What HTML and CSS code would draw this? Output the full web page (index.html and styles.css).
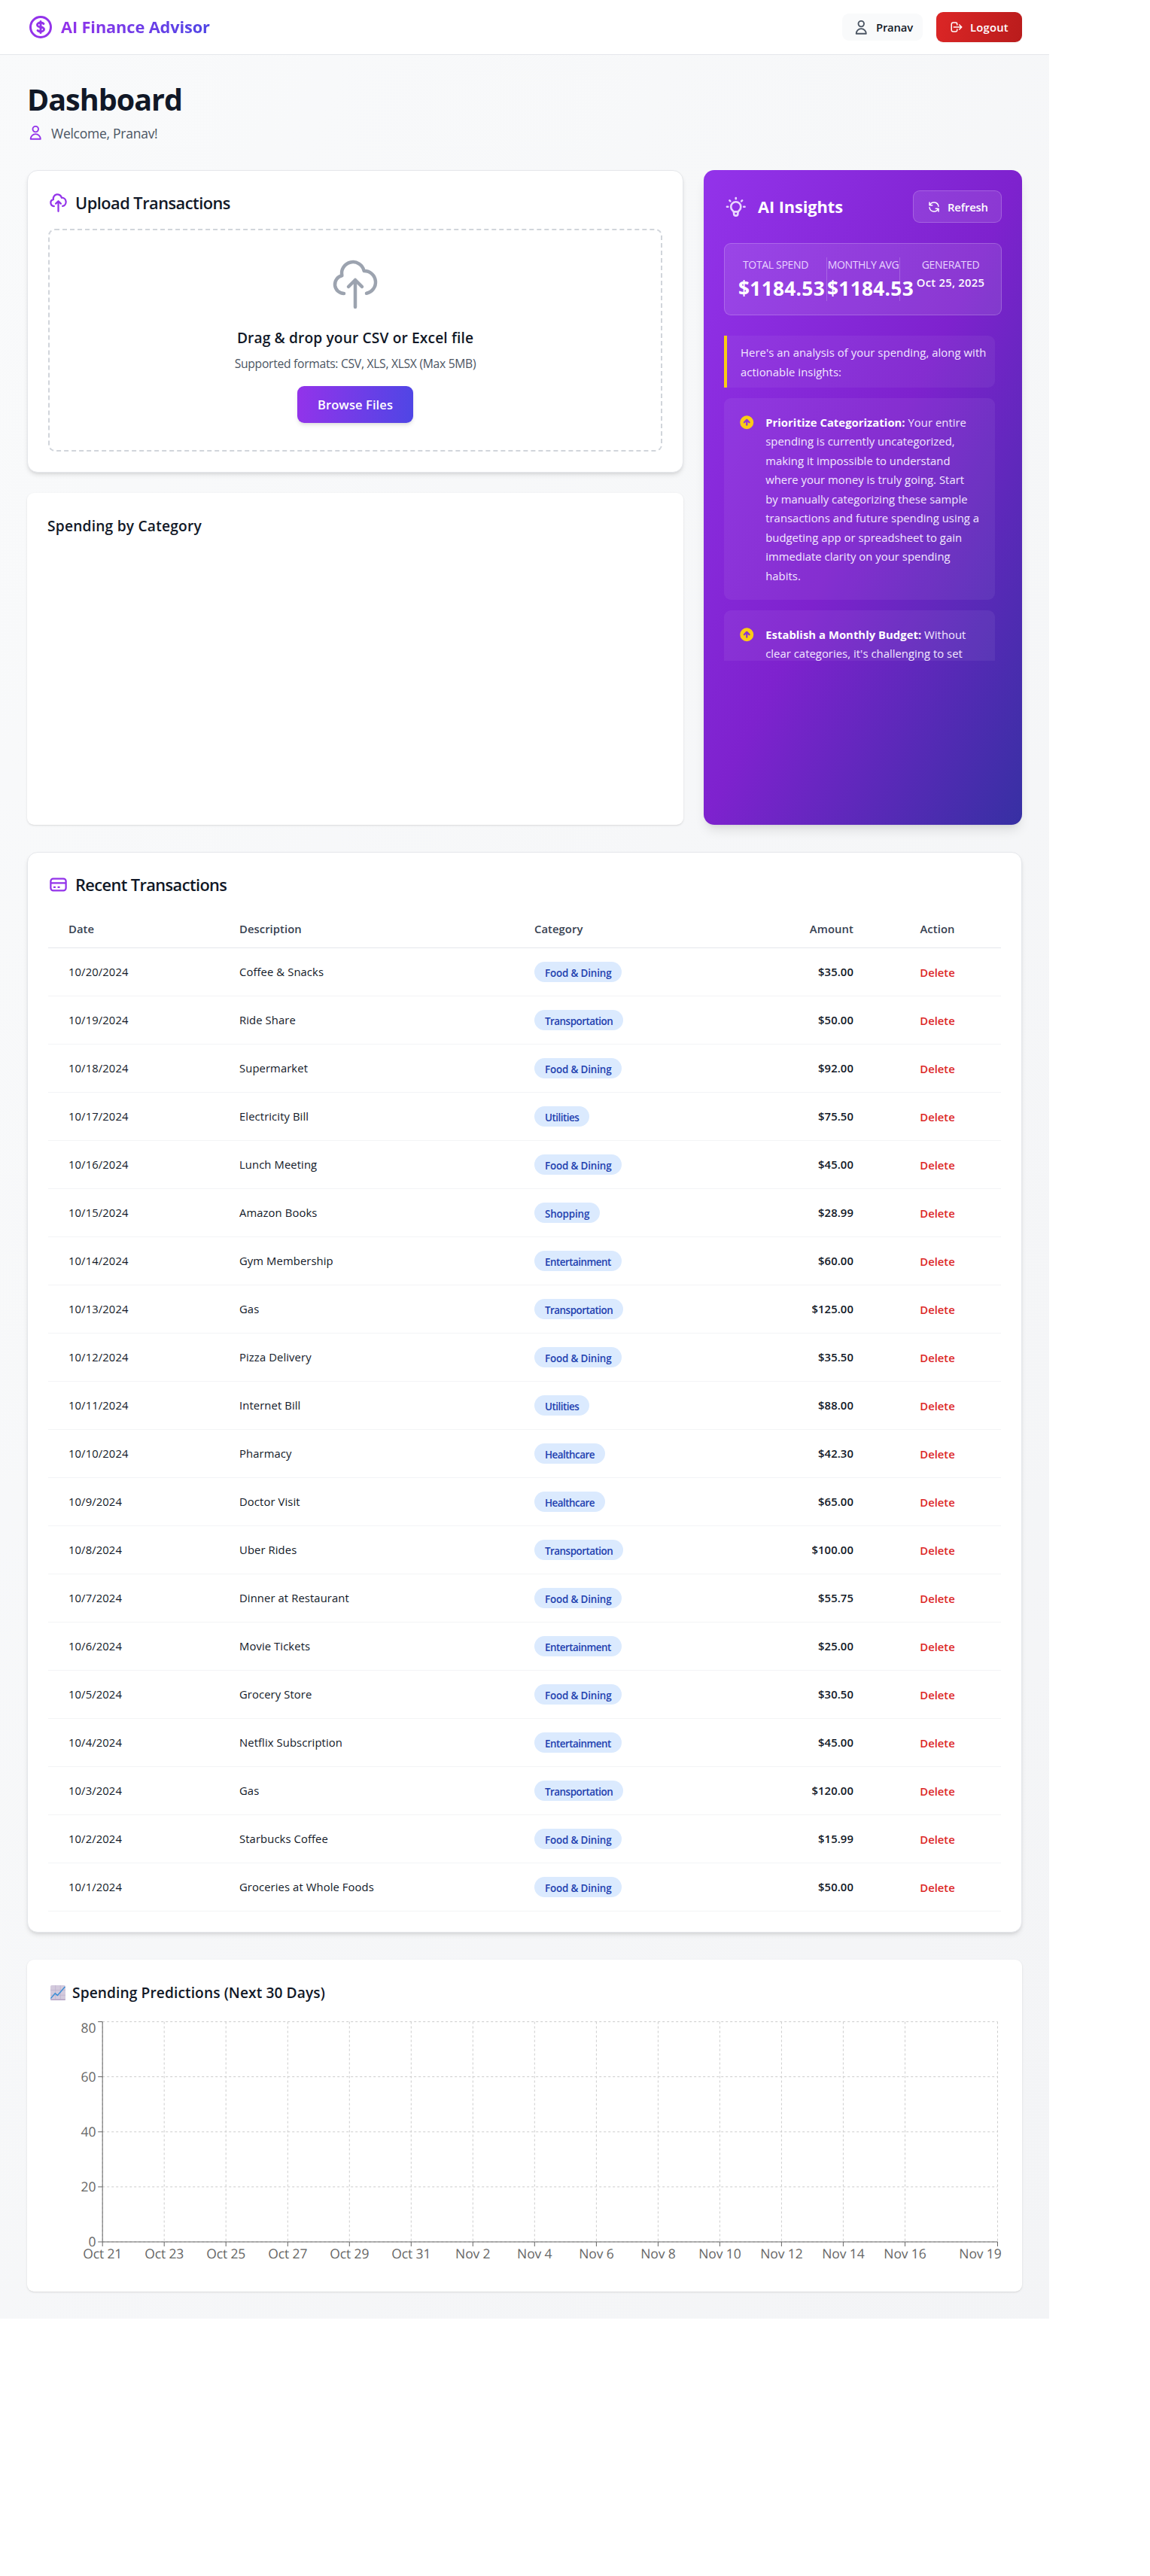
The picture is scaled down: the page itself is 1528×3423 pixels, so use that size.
FILE: index.html
```html
<!DOCTYPE html>
<html lang="en">
<head>
<meta charset="utf-8">
<title>AI Finance Advisor</title>
<link rel="stylesheet" href="styles.css">
</head>
<body>
<div class="app">
  <header class="topbar">
    <div class="brand">
      <svg class="icon icon-36" viewBox="0 0 24 24"><path d="M12 8c-1.657 0-3 .895-3 2s1.343 2 3 2 3 .895 3 2-1.343 2-3 2m0-8c1.11 0 2.08.402 2.599 1M12 8V7m0 1v8m0 0v1m0-1c-1.11 0-2.08-.402-2.599-1M21 12a9 9 0 11-18 0 9 9 0 0118 0z"/></svg>
      <span class="brand-name">AI Finance Advisor</span>
    </div>
    <div class="account">
      <div class="user-pill">
        <svg class="icon icon-22" viewBox="0 0 24 24"><path d="M16 7a4 4 0 11-8 0 4 4 0 018 0zM12 14a7 7 0 00-7 7h14a7 7 0 00-7-7z"/></svg>
        <span>Pranav</span>
      </div>
      <button class="logout" type="button">
        <svg class="icon icon-18" viewBox="0 0 24 24"><path d="M17 16l4-4m0 0l-4-4m4 4H7m6 4v1a3 3 0 01-3 3H6a3 3 0 01-3-3V7a3 3 0 013-3h4a3 3 0 013 3v1"/></svg>
        <span>Logout</span>
      </button>
    </div>
  </header>

  <main class="main">
    <h1 class="page-title">Dashboard</h1>
    <div class="welcome">
      <svg class="icon icon-22" viewBox="0 0 24 24"><path d="M16 7a4 4 0 11-8 0 4 4 0 018 0zM12 14a7 7 0 00-7 7h14a7 7 0 00-7-7z"/></svg>
      <span>Welcome, Pranav!</span>
    </div>

    <div class="overview">
      <div class="overview-left">
        <section class="card">
          <h2 class="card-title">
            <svg class="icon icon-27" viewBox="0 0 24 24"><path d="M7 16a4 4 0 01-.88-7.903A5 5 0 1115.9 6L16 6a5 5 0 011 9.9M15 13l-3-3m0 0l-3 3m3-3v12"/></svg>
            <span>Upload Transactions</span>
          </h2>
          <div class="dropzone">
            <svg class="icon icon-72" viewBox="0 0 24 24"><path d="M7 16a4 4 0 01-.88-7.903A5 5 0 1115.9 6L16 6a5 5 0 011 9.9M15 13l-3-3m0 0l-3 3m3-3v12"/></svg>
            <p class="drop-title">Drag &amp; drop your CSV or Excel file</p>
            <p class="drop-sub">Supported formats: CSV, XLS, XLSX (Max 5MB)</p>
            <button class="browse" type="button">Browse Files</button>
          </div>
        </section>
        <section class="panel">
          <h3 class="panel-title spaced">Spending by Category</h3>
        </section>
      </div>

      <aside class="insights">
        <div class="insights-head">
          <svg class="icon icon-bulb" viewBox="0 0 24 24"><path d="M9.663 17h4.673M12 3v1m6.364 1.636l-.707.707M21 12h-1M4 12H3m3.343-5.657l-.707-.707m2.828 9.9a5 5 0 117.072 0l-.548.547A3.374 3.374 0 0014 18.469V19a2 2 0 11-4 0v-.531c0-.895-.356-1.754-.988-2.386l-.548-.547z"/></svg>
          <h2 class="insights-title">AI Insights</h2>
          <button class="refresh" type="button">
            <svg class="icon icon-18" viewBox="0 0 24 24"><path d="M4 4v5h.582m15.356 2A8.001 8.001 0 004.582 9m0 0H9m11 11v-5h-.581m0 0a8.003 8.003 0 01-15.357-2m15.357 2H15"/></svg>
            <span>Refresh</span>
          </button>
        </div>
        <div class="stats">
          <div class="stat">
            <div class="stat-label">TOTAL SPEND</div>
            <div class="stat-value">$1184.53</div>
          </div>
          <div class="stat">
            <div class="stat-label">MONTHLY AVG</div>
            <div class="stat-value">$1184.53</div>
          </div>
          <div class="stat">
            <div class="stat-label">GENERATED</div>
            <div class="stat-date">Oct 25, 2025</div>
          </div>
        </div>
        <div class="insight-list">
          <p class="intro">Here's an analysis of your spending, along with<br>actionable insights:</p>
          <div class="insight">
            <svg class="bullet" viewBox="0 0 20 20"><path fill-rule="evenodd" d="M10 18a8 8 0 100-16 8 8 0 000 16zm3.707-8.707l-3-3a1 1 0 00-1.414 0l-3 3a1 1 0 001.414 1.414L9 9.414V13a1 1 0 102 0V9.414l1.293 1.293a1 1 0 001.414-1.414z"/></svg>
            <p><strong>Prioritize Categorization:</strong> Your entire<br>spending is currently uncategorized,<br>making it impossible to understand<br>where your money is truly going. Start<br>by manually categorizing these sample<br>transactions and future spending using a<br>budgeting app or spreadsheet to gain<br>immediate clarity on your spending<br>habits.</p>
          </div>
          <div class="insight">
            <svg class="bullet" viewBox="0 0 20 20"><path fill-rule="evenodd" d="M10 18a8 8 0 100-16 8 8 0 000 16zm3.707-8.707l-3-3a1 1 0 00-1.414 0l-3 3a1 1 0 001.414 1.414L9 9.414V13a1 1 0 102 0V9.414l1.293 1.293a1 1 0 001.414-1.414z"/></svg>
            <p><strong>Establish a Monthly Budget:</strong> Without<br>clear categories, it's challenging to set</p>
          </div>
        </div>
      </aside>
    </div>

    <section class="card transactions">
      <h2 class="card-title">
        <svg class="icon icon-27" viewBox="0 0 24 24"><path d="M3 10h18M7 15h1m4 0h1m-7 4h12a3 3 0 003-3V8a3 3 0 00-3-3H6a3 3 0 00-3 3v8a3 3 0 003 3z"/></svg>
        <span>Recent Transactions</span>
      </h2>
      <table class="table">
        <thead>
          <tr><th class="c-date">Date</th><th class="c-desc">Description</th><th class="c-cat">Category</th><th class="c-amount">Amount</th><th class="c-action">Action</th></tr>
        </thead>
        <tbody>
          <tr><td>10/20/2024</td><td>Coffee &amp; Snacks</td><td><span class="badge">Food &amp; Dining</span></td><td class="c-amount">$35.00</td><td class="c-action"><a class="delete">Delete</a></td></tr>
          <tr><td>10/19/2024</td><td>Ride Share</td><td><span class="badge tight">Transportation</span></td><td class="c-amount">$50.00</td><td class="c-action"><a class="delete">Delete</a></td></tr>
          <tr><td>10/18/2024</td><td>Supermarket</td><td><span class="badge">Food &amp; Dining</span></td><td class="c-amount">$92.00</td><td class="c-action"><a class="delete">Delete</a></td></tr>
          <tr><td>10/17/2024</td><td>Electricity Bill</td><td><span class="badge tight">Utilities</span></td><td class="c-amount">$75.50</td><td class="c-action"><a class="delete">Delete</a></td></tr>
          <tr><td>10/16/2024</td><td>Lunch Meeting</td><td><span class="badge">Food &amp; Dining</span></td><td class="c-amount">$45.00</td><td class="c-action"><a class="delete">Delete</a></td></tr>
          <tr><td>10/15/2024</td><td>Amazon Books</td><td><span class="badge">Shopping</span></td><td class="c-amount">$28.99</td><td class="c-action"><a class="delete">Delete</a></td></tr>
          <tr><td>10/14/2024</td><td>Gym Membership</td><td><span class="badge tight">Entertainment</span></td><td class="c-amount">$60.00</td><td class="c-action"><a class="delete">Delete</a></td></tr>
          <tr><td>10/13/2024</td><td>Gas</td><td><span class="badge tight">Transportation</span></td><td class="c-amount">$125.00</td><td class="c-action"><a class="delete">Delete</a></td></tr>
          <tr><td>10/12/2024</td><td>Pizza Delivery</td><td><span class="badge">Food &amp; Dining</span></td><td class="c-amount">$35.50</td><td class="c-action"><a class="delete">Delete</a></td></tr>
          <tr><td>10/11/2024</td><td>Internet Bill</td><td><span class="badge tight">Utilities</span></td><td class="c-amount">$88.00</td><td class="c-action"><a class="delete">Delete</a></td></tr>
          <tr><td>10/10/2024</td><td>Pharmacy</td><td><span class="badge tight">Healthcare</span></td><td class="c-amount">$42.30</td><td class="c-action"><a class="delete">Delete</a></td></tr>
          <tr><td>10/9/2024</td><td>Doctor Visit</td><td><span class="badge tight">Healthcare</span></td><td class="c-amount">$65.00</td><td class="c-action"><a class="delete">Delete</a></td></tr>
          <tr><td>10/8/2024</td><td>Uber Rides</td><td><span class="badge tight">Transportation</span></td><td class="c-amount">$100.00</td><td class="c-action"><a class="delete">Delete</a></td></tr>
          <tr><td>10/7/2024</td><td>Dinner at Restaurant</td><td><span class="badge">Food &amp; Dining</span></td><td class="c-amount">$55.75</td><td class="c-action"><a class="delete">Delete</a></td></tr>
          <tr><td>10/6/2024</td><td>Movie Tickets</td><td><span class="badge tight">Entertainment</span></td><td class="c-amount">$25.00</td><td class="c-action"><a class="delete">Delete</a></td></tr>
          <tr><td>10/5/2024</td><td>Grocery Store</td><td><span class="badge">Food &amp; Dining</span></td><td class="c-amount">$30.50</td><td class="c-action"><a class="delete">Delete</a></td></tr>
          <tr><td>10/4/2024</td><td>Netflix Subscription</td><td><span class="badge tight">Entertainment</span></td><td class="c-amount">$45.00</td><td class="c-action"><a class="delete">Delete</a></td></tr>
          <tr><td>10/3/2024</td><td>Gas</td><td><span class="badge tight">Transportation</span></td><td class="c-amount">$120.00</td><td class="c-action"><a class="delete">Delete</a></td></tr>
          <tr><td>10/2/2024</td><td>Starbucks Coffee</td><td><span class="badge">Food &amp; Dining</span></td><td class="c-amount">$15.99</td><td class="c-action"><a class="delete">Delete</a></td></tr>
          <tr><td>10/1/2024</td><td>Groceries at Whole Foods</td><td><span class="badge">Food &amp; Dining</span></td><td class="c-amount">$50.00</td><td class="c-action"><a class="delete">Delete</a></td></tr>
        </tbody>
      </table>
    </section>

    <section class="panel predictions">
      <h3 class="panel-title with-icon">
        <svg class="chart-icon" viewBox="0 0 20 20">
          <rect width="20" height="20" rx="1.8" fill="#d3cadd"/>
          <path d="M0 18.6h20V19a1.2 1.2 0 01-1.2 1H1.2A1.2 1.2 0 010 19z" fill="#b3a3c4"/>
          <path d="M6.7 0v19M13.3 0v19M0 6.6h20M0 13.2h20" stroke="#bfb2cd" stroke-width=".8"/>
          <path d="M.4 17.6l5.8-6.8 3.2 2.6L19.4 2" fill="none" stroke="#3b8fd6" stroke-width="1.5"/>
        </svg>
        <span>Spending Predictions (Next 30 Days)</span>
      </h3>
      <svg class="chart" viewBox="0 0 1266 353">
        <path class="grid" d="M72.2 22.5H1261.5M72.2 95.6H1261.5M72.2 168.8H1261.5M72.2 241.9H1261.5M72.2 315H1261.5"/>
        <path class="grid" d="M72.2 22.5V315M154.2 22.5V315M236.2 22.5V315M318.3 22.5V315M400.3 22.5V315M482.3 22.5V315M564.3 22.5V315M646.3 22.5V315M728.4 22.5V315M810.4 22.5V315M892.4 22.5V315M974.4 22.5V315M1056.4 22.5V315M1138.5 22.5V315M1261.5 22.5V315"/>
        <path class="axis" d="M72.2 22.5V315H1261.5M66.2 22.5h6M66.2 95.6h6M66.2 168.8h6M66.2 241.9h6M66.2 315h6"/>
        <path class="axis" d="M72.2 315v6M154.2 315v6M236.2 315v6M318.3 315v6M400.3 315v6M482.3 315v6M564.3 315v6M646.3 315v6M728.4 315v6M810.4 315v6M892.4 315v6M974.4 315v6M1056.4 315v6M1138.5 315v6M1261.5 315v6"/>
        <g class="y-label">
          <text x="63.5" y="36.8">80</text><text x="63.5" y="101.6">60</text><text x="63.5" y="174.8">40</text><text x="63.5" y="247.9">20</text><text x="63.5" y="321">0</text>
        </g>
        <g class="x-label">
          <text x="72.2" y="337">Oct 21</text><text x="154.2" y="337">Oct 23</text><text x="236.2" y="337">Oct 25</text><text x="318.3" y="337">Oct 27</text><text x="400.3" y="337">Oct 29</text><text x="482.3" y="337">Oct 31</text><text x="564.3" y="337">Nov 2</text><text x="646.3" y="337">Nov 4</text><text x="728.4" y="337">Nov 6</text><text x="810.4" y="337">Nov 8</text><text x="892.4" y="337">Nov 10</text><text x="974.4" y="337">Nov 12</text><text x="1056.4" y="337">Nov 14</text><text x="1138.5" y="337">Nov 16</text><text x="1238.5" y="337">Nov 19</text>
        </g>
      </svg>
    </section>
  </main>
</div>
</body>
</html>
```
FILE: styles.css
```css
* { box-sizing: border-box; }
body { margin: 0; background: #fff; color: #111827; font-family: "Open Sans", "Noto Sans", sans-serif; font-size: 14.8px; }
h1, h2, h3, p { margin: 0; }
button { font: inherit; border: 0; padding: 0; }

.app { width: 1394px; height: 3081px; background: linear-gradient(to bottom right, #f9fafb, #f3f4f6); }

.icon { fill: none; stroke: currentColor; stroke-width: 2; stroke-linecap: round; stroke-linejoin: round; flex: none; display: block; }
.icon-18 { width: 18px; height: 18px; }
.icon-22 { width: 22.5px; height: 22.5px; }
.icon-27 { width: 27px; height: 27px; }
.icon-36 { width: 36px; height: 36px; }
.icon-72 { width: 72px; height: 72px; stroke-width: 1.5; color: #9ca3af; }
.icon-bulb { width: 31.5px; height: 31.5px; color: #e9d5ff; }

.topbar { height: 73px; padding: 0 36px; display: flex; align-items: center; justify-content: space-between; background: #fff; border-bottom: 1px solid #e5e7eb; }
.brand { display: flex; align-items: center; gap: 9px; color: #9333ea; }
.brand-name { font-size: 21.8px; font-weight: 700; letter-spacing: -.13px; line-height: 34px; padding-bottom: 1px; background: linear-gradient(90deg, #9333ea, #4f46e5); -webkit-background-clip: text; background-clip: text; color: transparent; }
.account { display: flex; align-items: center; gap: 18px; font-weight: 600; }
.user-pill { width: 107px; height: 36px; padding-left: 13.5px; display: flex; align-items: center; gap: 9px; background: #f9fafb; border-radius: 9px; letter-spacing: -.18px; }
.user-pill .icon { color: #4b5563; }
.logout { width: 114px; height: 40px; padding-left: 18px; display: flex; align-items: center; gap: 9px; border-radius: 9px; color: #fff; letter-spacing: .22px; background: linear-gradient(105deg, #dc2626, #b91c1c); box-shadow: 0 1px 2px rgba(0, 0, 0, .05); }

.main { padding: 36px; }
.page-title { font-size: 39.5px; line-height: 47px; font-weight: 700; letter-spacing: -1px; }
.welcome { margin-top: 7px; height: 27px; display: flex; align-items: center; gap: 9.5px; font-size: 17.5px; letter-spacing: -.26px; color: #4b5563; }
.welcome .icon { color: #9333ea; }

.overview { margin-top: 36px; display: grid; grid-template-columns: 872px 423px; gap: 27px; height: 870px; }
.overview-left { display: flex; flex-direction: column; gap: 27px; }

.card { background: #fff; border: 1px solid #e5e7eb; border-radius: 14px; padding: 27px; box-shadow: 0 4px 6px -1px rgba(0, 0, 0, .1), 0 2px 4px -2px rgba(0, 0, 0, .1); }
.card-title { display: flex; align-items: center; gap: 9px; height: 30px; font-size: 21.8px; font-weight: 600; letter-spacing: -.52px; }
.card-title .icon { color: #9333ea; }

.dropzone { margin-top: 20px; height: 296px; padding-top: 36px; border: 2px dashed #d1d5db; border-radius: 9px; display: flex; flex-direction: column; align-items: center; }
.drop-title { margin-top: 21px; line-height: 28px; font-size: 19.2px; font-weight: 600; letter-spacing: .12px; }
.drop-sub { margin-top: 7px; line-height: 26px; font-size: 15.7px; letter-spacing: -.3px; color: #4b5563; }
.browse { margin-top: 17px; width: 154px; height: 49px; border-radius: 9px; color: #fff; font-size: 16.5px; font-weight: 600; letter-spacing: .1px; background: linear-gradient(95deg, #9333ea, #4f46e5); box-shadow: 0 4px 6px -1px rgba(0, 0, 0, .1), 0 2px 4px -2px rgba(0, 0, 0, .1); }

.panel { height: 441px; padding: 27px; background: #fff; border-radius: 9px; box-shadow: 0 1px 3px rgba(0, 0, 0, .1), 0 1px 2px -1px rgba(0, 0, 0, .1); }
.panel-title { font-size: 19.2px; line-height: 33px; font-weight: 600; letter-spacing: .08px; }
.panel-title.spaced { letter-spacing: .2px; }

.insights { height: 870px; padding: 27px; border-radius: 14px; color: #fff; background: linear-gradient(to bottom right, #9333ea, #7e22ce 50%, #3730a3); box-shadow: 0 10px 15px -3px rgba(0, 0, 0, .1), 0 4px 6px -4px rgba(0, 0, 0, .1); }
.insights-head { height: 43px; display: flex; align-items: center; gap: 13.5px; }
.insights-title { flex: 1; font-size: 21.8px; font-weight: 700; letter-spacing: -.09px; }
.refresh { width: 118px; height: 43px; padding-left: 18px; display: flex; align-items: center; gap: 9px; border: 1px solid rgba(255, 255, 255, .2); border-radius: 9px; color: #fff; font-weight: 600; letter-spacing: -.14px; background: rgba(255, 255, 255, .1); }
.stats { margin-top: 27px; height: 96px; padding: 18px; display: grid; grid-template-columns: 118px 97px 116px; border: 1px solid rgba(255, 255, 255, .2); border-radius: 9px; background: rgba(255, 255, 255, .1); text-align: center; white-space: nowrap; }
.stat:nth-child(1) { padding-right: 18px; border-right: 1px solid rgba(255, 255, 255, .2); }
.stat:nth-child(2) { border-right: 1px solid rgba(255, 255, 255, .2); }
.stat:nth-child(3) { padding-left: 18px; }
.stat-label { font-size: 14px; line-height: 20px; letter-spacing: -.33px; color: #e9d5ff; }
.stat-value { margin-top: 4px; font-size: 26.2px; line-height: 34px; font-weight: 700; letter-spacing: .34px; }
.stat-date { margin: 4px -10px 0; line-height: 19px; font-weight: 600; letter-spacing: .25px; }

.insight-list { margin-top: 27px; height: 432px; padding-right: 9px; overflow: hidden; display: flex; flex-direction: column; gap: 14px; color: #f3e8ff; white-space: nowrap; letter-spacing: .05px; }
.intro { flex: none; height: 69px; padding: 9px 0 0 18px; line-height: 26px; border-left: 4px solid #facc15; border-radius: 0 9px 9px 0; background: rgba(255, 255, 255, .05); letter-spacing: .08px; }
.insight { flex: none; height: 268px; padding: 19.5px 0 0 18.7px; display: flex; gap: 14px; line-height: 25.5px; border-radius: 9px; background: rgba(255, 255, 255, .06); }
.insight strong { color: #fff; font-weight: 700; }
.bullet { width: 22.5px; height: 22.5px; margin-top: 1px; fill: #facc15; flex: none; }

.transactions { margin-top: 36px; height: 1436px; }
.transactions .card-title { letter-spacing: -.6px; }
.table { margin-top: 18px; width: 1266px; table-layout: fixed; border-collapse: separate; border-spacing: 0; }
.table th { height: 52px; padding: 0 27px; text-align: left; font-weight: 600; color: #374151; border-bottom: 1px solid #e5e7eb; letter-spacing: .06px; }
.table td { height: 64px; padding: 0 27px 2px; border-bottom: 1px solid #f3f4f6; letter-spacing: .1px; }
.c-date { width: 227px; }
.c-desc { width: 392px; }
.c-cat { width: 250px; }
.table .c-amount { text-align: right; font-weight: 600; letter-spacing: .1px; }
.table .c-action { width: 169px; text-align: center; letter-spacing: .1px; }
.c-action .delete { position: relative; top: 1px; color: #dc2626; font-weight: 600; letter-spacing: 0; }
.badge { display: inline-block; vertical-align: middle; height: 27px; margin-top: 1px; padding: 3px 14px 0; line-height: 24px; border-radius: 14px; font-size: 13.4px; font-weight: 600; letter-spacing: -.15px; color: #1e40af; background: #dbeafe; }
.badge.tight { letter-spacing: -.5px; }

.predictions { margin-top: 36px; }
.with-icon { display: flex; align-items: center; gap: 9px; padding-left: 4px; }
.chart-icon { width: 20px; height: 20px; }
.chart { display: block; margin: 0 0 0 1px; width: 1266px; height: 353px; overflow: visible; }
.grid { fill: none; stroke: #ccc; stroke-dasharray: 3 3; }
.axis { fill: none; stroke: #666; }
.chart text { font-size: 17.5px; fill: #666; text-rendering: geometricPrecision; }
.y-label text { text-anchor: end; }
.x-label text { text-anchor: middle; letter-spacing: -.12px; }
```
